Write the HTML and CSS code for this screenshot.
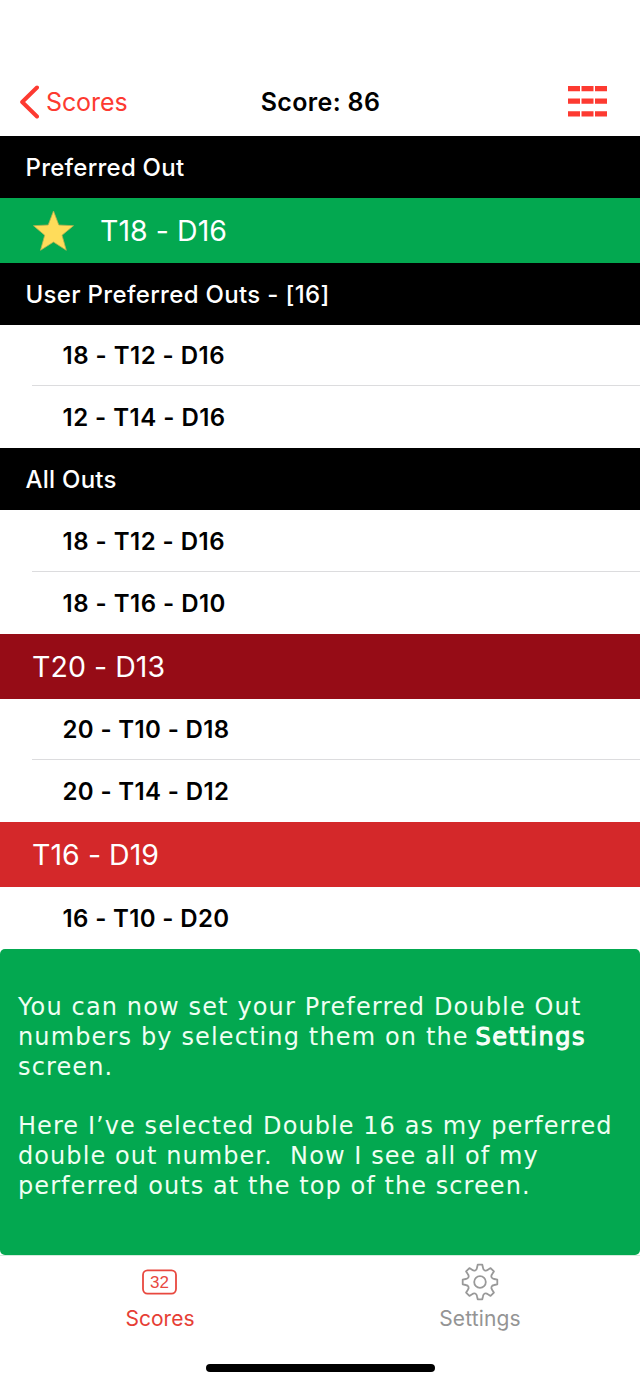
FILE: index.html
```html
<!DOCTYPE html>
<html lang="en">
<head>
<meta charset="utf-8">
<title>Score: 86</title>
<link rel="stylesheet" href="styles.css">
</head>
<body>
<main class="screen">
  <header class="nav">
    <a class="back"><svg class="chevron" width="20" height="34" viewBox="0 0 20 34"><path d="M18 2.5 L3.2 17 L18 31.5"/></svg><span>Scores</span></a>
    <h1 class="title">Score: 86</h1>
    <svg class="grid-icon" width="39" height="31" viewBox="0 0 39 31"><path d="M0 2.6H39M0 15.2H39M0 27.9H39"/></svg>
  </header>

  <section>
    <h2 class="head">Preferred Out</h2>
    <div class="big green"><svg class="star" width="42" height="42" viewBox="0 0 42 42"><path d="M21.5 1 L26.8 15 L41.5 15.7 L30 25.2 L34.3 40.3 L21.5 32 L8.5 40.3 L12.7 25.2 L1.5 15.7 L16.2 15Z"/></svg><span>T18 - D16</span></div>
  </section>

  <section>
    <h2 class="head user">User Preferred Outs - [16]</h2>
    <div class="row line"><span>18 - T12 - D16</span></div>
    <div class="row"><span>12 - T14 - D16</span></div>
  </section>

  <section>
    <h2 class="head">All Outs</h2>
    <div class="row line"><span>18 - T12 - D16</span></div>
    <div class="row"><span>18 - T16 - D10</span></div>
    <div class="big dark"><span>T20 - D13</span></div>
    <div class="row tight line"><span>20 - T10 - D18</span></div>
    <div class="row tight"><span>20 - T14 - D12</span></div>
    <div class="big red"><span>T16 - D19</span></div>
    <div class="row tight"><span>16 - T10 - D20</span></div>
  </section>

  <aside class="note">
    <p>You can now set your Preferred Double Out<br>numbers by selecting them on the <b>Settings</b><br>screen.</p>
    <p class="second">Here I’ve selected Double 16 as my perferred<br>double out number.&nbsp; Now I see all of my<br>perferred outs at the top of the screen.</p>
  </aside>

  <nav class="tabs">
    <a class="tab active">
      <svg width="40" height="40" viewBox="0 0 40 40"><rect x="3" y="8.4" width="33" height="23.2" rx="4.5"/><text x="19.5" y="26.3">32</text></svg>
      <span>Scores</span>
    </a>
    <a class="tab">
      <svg width="40" height="40" viewBox="-20 -20 40 40">
        <defs><path id="quarter" d="M0 -17.3 H2.3 L3 -14.2 C3.4 -11.4 5.7 -10.5 7.9 -12.2 L10.6 -13.9 L13.9 -10.6 L12.2 -7.9 C10.5 -5.7 11.4 -3.4 14.2 -3 L17.3 -2.3 V0"/></defs>
        <use href="#quarter"/><use href="#quarter" transform="rotate(90)"/><use href="#quarter" transform="rotate(180)"/><use href="#quarter" transform="rotate(270)"/>
        <circle r="5.8"/>
      </svg>
      <span class="settings">Settings</span>
    </a>
  </nav>
  <div class="home"></div>
</main>
</body>
</html>
```
FILE: styles.css
```css
* { box-sizing: border-box; }
body { margin: 0; background: #fff; }
.screen {
  width: 640px;
  height: 1385px;
  display: flex;
  flex-direction: column;
  overflow: hidden;
  font-family: Inter, "Liberation Sans", sans-serif;
  color: #000;
}
h1, h2, p { margin: 0; }
svg { display: block; flex: none; }

.nav {
  height: 136px;
  padding: 68px 33px 0 19px;
  display: grid;
  grid-template-columns: 1fr auto 1fr;
  align-items: center;
}
.back { display: flex; align-items: center; gap: 7px; color: #fd3a31; font-size: 25px; }
.back span { letter-spacing: -.1px; }
.chevron { fill: none; stroke: #fd3a31; stroke-width: 4; stroke-linecap: round; stroke-linejoin: round; }
.title { margin-left: 15px; font-size: 25px; font-weight: 600; line-height: 30px; letter-spacing: .35px; }
.grid-icon { justify-self: end; margin-bottom: 2px; fill: none; stroke: #fd3a31; stroke-width: 5.2; stroke-dasharray: 12 1.5; }

.head {
  height: 62px;
  padding-left: 25.5px;
  display: flex;
  align-items: center;
  background: #000;
  color: #fff;
  font-size: 24px;
  font-weight: 500;
  letter-spacing: .25px;
}
.user { height: 61.5px; padding-top: 1px; letter-spacing: .33px; }
.row {
  height: 61.8px;
  padding: 1px 0 0 62.5px;
  display: flex;
  align-items: center;
  font-size: 24px;
  font-weight: 600;
  letter-spacing: .48px;
}
.tight { padding-top: 0; letter-spacing: .36px; }
.line {
  background: linear-gradient(#dcdcde, #dcdcde) 32px 100% / 608px 1px no-repeat;
}
.big {
  height: 65px;
  padding-left: 32px;
  display: flex;
  align-items: center;
  color: #fff;
  font-size: 28.5px;
  font-weight: 400;
  letter-spacing: .05px;
}
.green { background: #03a850; gap: 26px; }
.dark { background: #960c16; }
.red { background: #d4282a; }
.star { fill: #ffdc5a; stroke: #b8b052; stroke-width: .8; }

.note {
  height: 306px;
  padding: 44px 18px 0;
  border-radius: 5px;
  background: #03a850;
  color: #effff2;
  font-family: "DejaVu Sans", sans-serif;
  font-size: 24px;
  line-height: 29.75px;
  letter-spacing: 1.14px;
  white-space: nowrap;
}
.note .second { margin-top: 29.75px; letter-spacing: 1.07px; }
.note b { font-weight: 400; letter-spacing: 1.5px; margin-left: -2px; -webkit-text-stroke: 1px #fff; }

.tabs { display: flex; padding-top: 6px; border-top: 1px solid #d5ebdd; }
.tab {
  flex: 1;
  display: flex;
  flex-direction: column;
  align-items: center;
  gap: 3px;
  color: #949494;
  font-size: 21px;
  line-height: 28px;
}
.tab svg { fill: none; stroke: #999; stroke-width: 1.8; stroke-linejoin: round; }
.tab.active { color: #e63e35; }
.tab.active svg { stroke: #e8483f; }
.tab text { fill: #e8483f; stroke: none; font: 17px "Liberation Sans", sans-serif; text-anchor: middle; }
.settings { letter-spacing: .15px; }
.home { width: 229px; height: 8px; margin: 31px auto 0; border-radius: 4px; background: #000; }
```
